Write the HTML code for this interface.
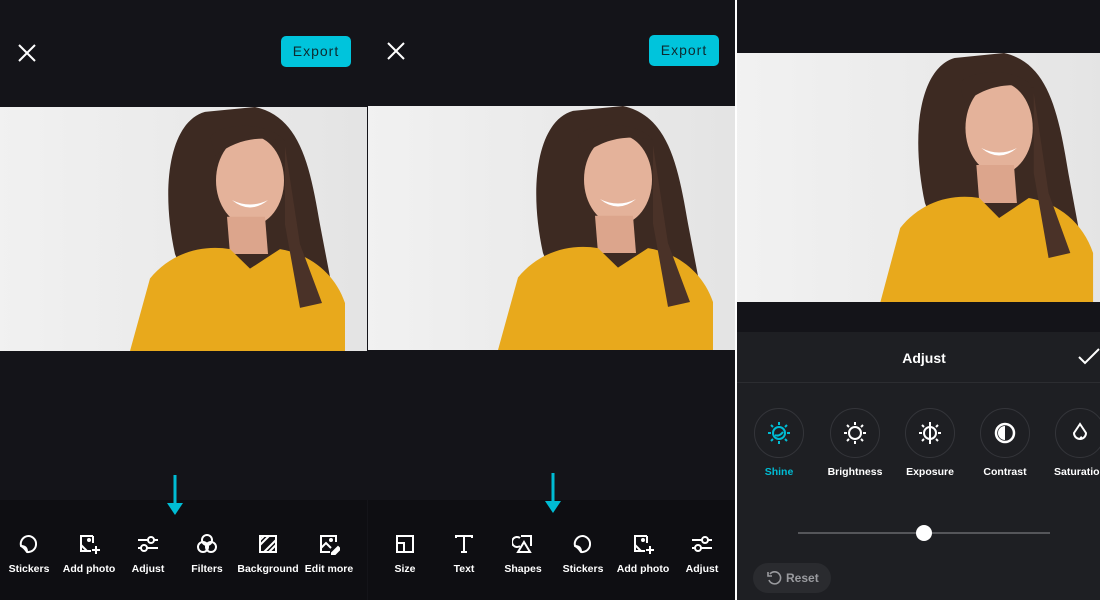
<!DOCTYPE html>
<html><head><meta charset="utf-8"><style>
*{margin:0;padding:0;box-sizing:border-box}
body{width:1100px;height:600px;background:#141419;position:relative;overflow:hidden;font-family:"Liberation Sans",sans-serif;color:#fff}
.a{position:absolute}
.btn{background:#00c4dc;border-radius:5px;color:#0d2a30;font-size:14px;letter-spacing:1px;text-align:center;line-height:31px;width:70px;height:31px}
.bar{background:#0e0e12;height:100px;top:500px}
.it{position:absolute;width:70px;margin-left:-35px;text-align:center;font-size:10.5px;font-weight:bold;top:563px}
.ic{position:absolute;margin-left:-11px;top:533px}
.lab{position:absolute;width:80px;margin-left:-40px;text-align:center;font-size:10.5px;font-weight:bold;top:466px}
.cir{position:absolute;width:50px;height:50px;margin-left:-25px;border:1px solid #34353a;border-radius:50%;top:408px}
</style></head><body>
<svg width="0" height="0" style="position:absolute"><defs>
<linearGradient id="bg" x1="0" x2="1"><stop offset="0" stop-color="#f3f3f3"/><stop offset="1" stop-color="#e2e2e2"/></linearGradient>
<g id="w">
<rect x="-60" width="480" height="249" fill="url(#bg)"/>
<path d="M205 5 C170 15 160 80 175 150 L195 200 L335 200 L320 120 C310 60 300 10 255 0 Z" fill="#3d2a22"/>
<ellipse cx="250" cy="75" rx="34" ry="46" fill="#e4b29a"/>
<path d="M227 112 L265 112 L268 150 L230 150 Z" fill="#dca58c"/>
<path d="M130 249 L150 175 C170 150 200 140 230 145 L250 165 L280 145 C310 150 335 170 345 200 L345 249 Z" fill="#e8a91c"/>
<path d="M210 30 C225 15 270 15 285 35 C265 30 240 30 215 50 Z" fill="#3d2a22"/>
<path d="M285 40 L300 140 L322 200 L300 205 L285 120Z" fill="#4a3228"/>
<path d="M232 95 Q250 110 268 95 Q250 104 232 95Z" fill="#fff"/>
</g>
<g id="arw"><rect x="-1.5" y="0" width="3" height="30" fill="#00bcd4"/><path d="M-8 28 L8 28 L0 40Z" fill="#00bcd4"/></g>
<g id="stk" fill="none" stroke="#fff" stroke-width="2"><path d="M11 3a8 8 0 1 1-2 16C7 16 5 14 3 13A8 8 0 0 1 11 3Z"/><path d="M3 13c4 0 6 2 6 6"/></g>
<g id="add" fill="none" stroke="#fff" stroke-width="2"><path d="M15 3H3v15h10"/><path d="M3 12l6 6"/><path d="M15 3v7"/><circle cx="11" cy="7" r="1" fill="#fff"/><path d="M18 13v8M14 17h8"/></g>
<g id="adj" fill="none" stroke="#fff" stroke-width="2"><path d="M1 7h20M1 15h20"/><circle cx="14" cy="7" r="3" fill="#0e0e12"/><circle cx="7" cy="15" r="3" fill="#0e0e12"/></g>
</defs></svg>

<div class="a" style="left:0;top:0;width:367px;height:600px;background:#141419"></div>
<svg class="a" style="left:17px;top:43px" width="20" height="20"><path d="M2 2L18 18M18 2L2 18" stroke="#fff" stroke-width="2"/></svg>
<div class="a btn" style="left:281px;top:36px">Export</div>
<svg class="a" style="left:0;top:107px" width="367" height="244" viewBox="0 0 367 249" preserveAspectRatio="none"><use href="#w"/></svg>
<div class="a bar" style="left:0;width:367px"></div>
<svg class="a" style="left:175px;top:475px" width="1" height="42" overflow="visible"><use href="#arw"/></svg>
<svg class="ic" style="left:29px" width="22" height="22"><use href="#stk"/></svg>
<svg class="ic" style="left:89px" width="22" height="22"><use href="#add"/></svg>
<svg class="ic" style="left:148px" width="22" height="22"><use href="#adj"/></svg>
<svg class="ic" style="left:207px" width="22" height="22" fill="none" stroke="#fff" stroke-width="2"><circle cx="11" cy="7" r="5"/><circle cx="7" cy="14" r="5"/><circle cx="15" cy="14" r="5"/></svg>
<svg class="ic" style="left:268px" width="22" height="22" fill="none" stroke="#fff" stroke-width="2"><rect x="3" y="3" width="16" height="16"/><path d="M3 12L12 3M7 19L19 7M12 19L19 12M3 7L7 3"/></svg>
<svg class="ic" style="left:329px" width="22" height="22" fill="none" stroke="#fff" stroke-width="2"><path d="M18 9V3H3v16h9"/><path d="M3 15l5-5 5 5"/><circle cx="13" cy="7" r="1" fill="#fff"/><path d="M14 20l6-6 2 2-6 6h-2z" fill="#fff"/></svg>
<div class="it" style="left:29px">Stickers</div><div class="it" style="left:89px">Add photo</div><div class="it" style="left:148px">Adjust</div><div class="it" style="left:207px">Filters</div><div class="it" style="left:268px">Background</div><div class="it" style="left:329px">Edit more</div>

<svg class="a" style="left:386px;top:41px" width="20" height="20"><path d="M2 2L18 18M18 2L2 18" stroke="#fff" stroke-width="2"/></svg>
<div class="a btn" style="left:649px;top:35px">Export</div>
<svg class="a" style="left:368px;top:106px" width="367" height="244" viewBox="0 0 367 249" preserveAspectRatio="none"><use href="#w"/></svg>
<div class="a bar" style="left:368px;width:367px"></div>
<svg class="a" style="left:553px;top:473px" width="1" height="42" overflow="visible"><use href="#arw"/></svg>
<svg class="ic" style="left:405px" width="22" height="22" fill="none" stroke="#fff" stroke-width="2"><rect x="3" y="3" width="16" height="16"/><path d="M3 10h7v9"/></svg>
<svg class="ic" style="left:464px" width="22" height="22" fill="none" stroke="#fff" stroke-width="2"><path d="M3 5V3h16v2M11 3v16M8 19h6"/></svg>
<svg class="ic" style="left:523px" width="22" height="22" fill="none" stroke="#fff" stroke-width="2"><path d="M8 5a5 5 0 1 0 0 8"/><path d="M9 3h10v10"/><path d="M12 9l6 10H6z"/></svg>
<svg class="ic" style="left:583px" width="22" height="22"><use href="#stk"/></svg>
<svg class="ic" style="left:643px" width="22" height="22"><use href="#add"/></svg>
<svg class="ic" style="left:702px" width="22" height="22"><use href="#adj"/></svg>
<div class="it" style="left:405px">Size</div><div class="it" style="left:464px">Text</div><div class="it" style="left:523px">Shapes</div><div class="it" style="left:583px">Stickers</div><div class="it" style="left:643px">Add photo</div><div class="it" style="left:702px">Adjust</div>

<div class="a" style="left:735px;top:0;width:2px;height:600px;background:#fff"></div>

<div class="a" style="left:737px;top:0;width:363px;height:600px;background:#141419"></div>
<svg class="a" style="left:737px;top:53px" width="363" height="249" viewBox="-15 0 367 249" preserveAspectRatio="none"><use href="#w"/></svg>
<div class="a" style="left:737px;top:332px;width:363px;height:268px;background:#1e1f23"></div>
<div class="a" style="left:737px;top:382px;width:363px;height:1px;background:#2c2d31"></div>
<div class="a" style="left:884px;top:350px;width:80px;text-align:center;font-size:14px;font-weight:bold">Adjust</div>
<svg class="a" style="left:1078px;top:348px" width="22" height="18" fill="none" stroke="#fff" stroke-width="2"><path d="M1 9l6 6L21 1"/></svg>
<div class="cir" style="left:779px"></div><div class="cir" style="left:855px"></div><div class="cir" style="left:930px"></div><div class="cir" style="left:1005px"></div><div class="cir" style="left:1080px"></div>
<svg class="a" style="left:767px;top:421px" width="24" height="24" fill="none" stroke="#00bcd4" stroke-width="2"><circle cx="12" cy="12" r="6"/><path d="M12 1v3M12 20v3M1 12h3M20 12h3M4 4l2 2M18 18l2 2M20 4l-2 2M6 18l-2 2M8 14q4 2 8-3"/></svg>
<svg class="a" style="left:843px;top:421px" width="24" height="24" fill="none" stroke="#fff" stroke-width="2"><circle cx="12" cy="12" r="6"/><path d="M12 1v3M12 20v3M1 12h3M20 12h3M4 4l2 2M18 18l2 2M20 4l-2 2M6 18l-2 2"/></svg>
<svg class="a" style="left:918px;top:421px" width="24" height="24" fill="none" stroke="#fff" stroke-width="2"><circle cx="12" cy="12" r="6"/><path d="M12 1v22M1 12h3M20 12h3M4 4l2 2M18 18l2 2M20 4l-2 2M6 18l-2 2"/></svg>
<svg class="a" style="left:993px;top:421px" width="24" height="24"><circle cx="12" cy="12" r="9" fill="none" stroke="#fff" stroke-width="2.5"/><path d="M12 5a7 7 0 0 0 0 14z" fill="#fff"/></svg>
<svg class="a" style="left:1068px;top:421px" width="24" height="24" fill="none" stroke="#fff" stroke-width="2"><path d="M12 3l6 9a6 6 0 1 1-12 0z"/><path d="M14 16l-2 1"/></svg>
<div class="lab" style="left:779px;color:#00bcd4">Shine</div><div class="lab" style="left:855px">Brightness</div><div class="lab" style="left:930px">Exposure</div><div class="lab" style="left:1005px">Contrast</div><div class="lab" style="left:1080px">Saturation</div>
<div class="a" style="left:798px;top:532px;width:252px;height:2px;background:#55565a"></div>
<div class="a" style="left:916px;top:525px;width:16px;height:16px;border-radius:50%;background:#fff"></div>
<div class="a" style="left:753px;top:563px;width:78px;height:30px;border-radius:15px;background:#2a2b2f;color:#9a9b9f;font-size:12px;font-weight:bold;line-height:30px;padding-left:33px">Reset</div>
<svg class="a" style="left:766px;top:570px" width="16" height="16" fill="none" stroke="#9a9b9f" stroke-width="1.6"><path d="M4 4a6 6 0 1 1-1 6"/><path d="M2 2v4h4"/></svg>
</body></html>
